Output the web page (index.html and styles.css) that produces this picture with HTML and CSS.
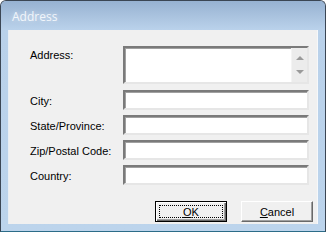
FILE: index.html
```html
<!DOCTYPE html>
<html>
<head>
<meta charset="utf-8">
<link rel="stylesheet" href="styles.css">
</head>
<body>
<div class="window">
  <div class="titlebar"><span class="title">Address</span></div>
  <div class="client">
    <div class="form">
      <label class="lbl lbl-top">Address:</label>
      <div class="field area">
        <div class="scroll">
          <span class="arrow up"></span>
          <span class="arrow down"></span>
        </div>
      </div>
      <label class="lbl">City:</label>
      <div class="field"></div>
      <label class="lbl">State/Province:</label>
      <div class="field"></div>
      <label class="lbl">Zip/Postal Code:</label>
      <div class="field"></div>
      <label class="lbl">Country:</label>
      <div class="field"></div>
    </div>
    <div class="buttons">
      <button class="btn default"><span class="focus"><u>O</u>K</span></button>
      <button class="btn"><span class="cap"><u>C</u>ancel</span></button>
    </div>
  </div>
</div>
</body>
</html>
```
FILE: styles.css
```css
html, body {
  margin: 0;
  padding: 0;
  background: #ffffff;
}

.window {
  width: 326px;
  height: 232px;
  box-sizing: border-box;
  border: 1px solid #3b4654;
  border-bottom-color: #2c6c88;
  border-radius: 6px 6px 0 0;
  background: linear-gradient(to bottom, #a6bfdc 0px, #b9d1ea 30px, #bcd4ec 100%);
  display: flex;
  flex-direction: column;
  overflow: hidden;
}

.titlebar {
  height: 29px;
  flex: none;
  display: flex;
  align-items: center;
  padding-left: 11px;
  background: linear-gradient(to bottom, #97b2d2 0%, #a9c2de 50%, #bad2eb 100%);
}

.title {
  font-family: "Open Sans", "Noto Sans", sans-serif;
  font-size: 12px;
  color: #f2f6fb;
  text-shadow: 0 0 5px rgba(255, 255, 255, 0.55);
  margin-top: 1px;
}

.client {
  margin: 0 7px;
  height: 194px;
  box-sizing: border-box;
  background: #f0f0f0;
  border-right: 1px solid #f6f8fa;
  border-left: 1px solid #e8eef4;
  display: flex;
  flex-direction: column;
  font-family: "Liberation Sans", Arial, sans-serif;
  font-size: 11px;
  color: #000000;
}

.form {
  display: grid;
  grid-template-columns: 93px 186px;
  grid-template-rows: 39px 20px 20px 20px 20px;
  row-gap: 5px;
  padding: 16px 0 0 21px;
}

.form .area {
  margin-bottom: 1px;
}

.lbl {
  display: flex;
  align-items: center;
  padding-top: 2px;
  line-height: 13px;
}

.lbl-top {
  align-items: flex-start;
  padding-top: 3px;
}

.field {
  box-sizing: border-box;
  background: #ffffff;
  border-style: solid;
  border-width: 2px;
  border-color: #7a7a7a #e6e6e6 #e6e6e6 #7a7a7a;
  box-shadow: inset 1px 1px 0 #a0a0a0;
  position: relative;
}

.area {
  display: flex;
  justify-content: flex-end;
  height: 38px;
}

.scroll {
  width: 16px;
  background: #ececec;
  border-left: 1px solid #f4f4f4;
  display: flex;
  flex-direction: column;
  align-items: center;
  justify-content: space-between;
  padding: 8px 0 8px;
  box-sizing: border-box;
}

.arrow {
  width: 0;
  height: 0;
  border-left: 4px solid transparent;
  border-right: 4px solid transparent;
}

.arrow.up {
  border-bottom: 4px solid #9a9a9a;
}

.arrow.down {
  border-top: 4px solid #9a9a9a;
}

.buttons {
  display: flex;
  justify-content: flex-end;
  gap: 14px;
  margin-top: 16px;
  padding-right: 4px;
}

.btn {
  width: 72px;
  height: 21px;
  box-sizing: border-box;
  margin: 0;
  padding: 0;
  background: #f0f0f0;
  font-family: "Liberation Sans", Arial, sans-serif;
  font-size: 11px;
  color: #000000;
  border-style: solid;
  border-width: 1px;
  border-color: #ffffff #696969 #696969 #ffffff;
  box-shadow: inset -1px -1px 0 #a0a0a0;
  display: flex;
  align-items: center;
  justify-content: center;
}

.btn.default {
  border: 1px solid #000000;
  box-shadow: inset 1px 1px 0 #ffffff, inset -1px -1px 0 #696969, inset -2px -2px 0 #a0a0a0;
  padding: 3px;
}

.focus {
  flex: 1;
  align-self: stretch;
  display: flex;
  align-items: center;
  justify-content: center;
  outline: 1px dotted #000000;
  outline-offset: 0;
  margin: 1px;
}

.cap {
  display: block;
}
```
